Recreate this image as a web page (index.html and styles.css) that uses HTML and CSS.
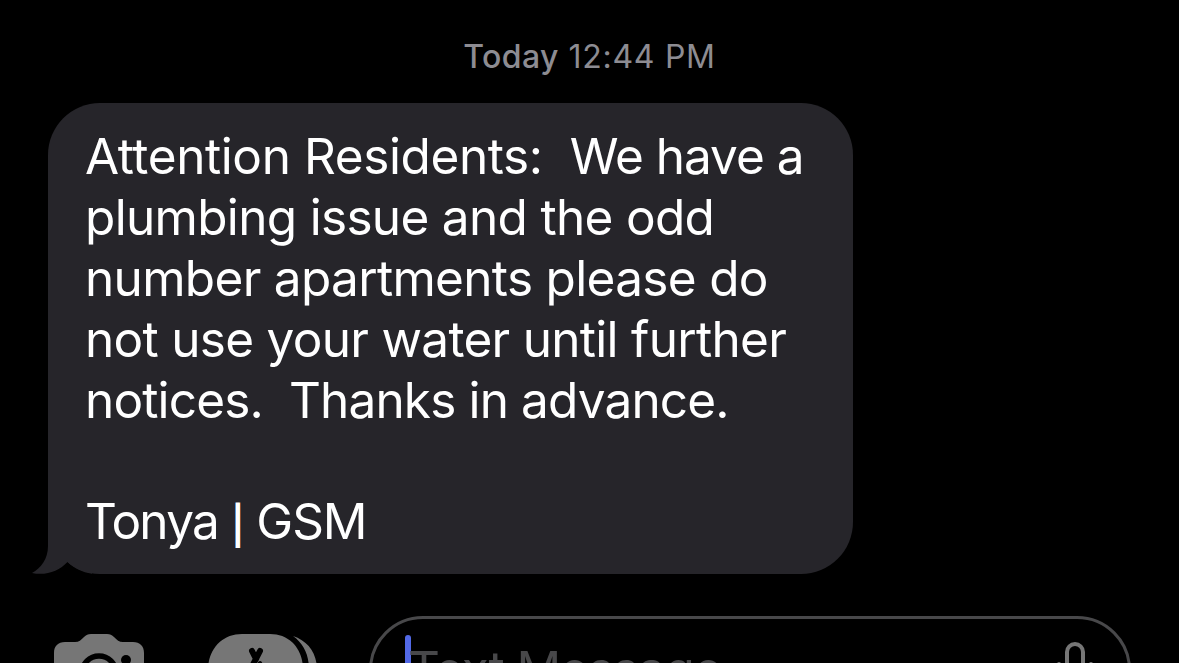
FILE: index.html
```
<!DOCTYPE html>
<html lang="en">
<head>
    <meta charset="UTF-8">
    <meta name="viewport" content="width=device-width, initial-scale=1.0">
    <title>Messages</title>
    <link rel="stylesheet" href="styles.css">
</head>
<body>
    <main class="chat">
        <div class="timestamp"><strong>Today</strong> 12:44 PM</div>
        <div class="bubble">
            <p class="line line-1">Attention Residents:  <span class="tight">We have a</span></p>
            <p class="line line-2">plumbing issue and the odd</p>
            <p class="line line-3">number apartments please do</p>
            <p class="line line-4">not use your water until further</p>
            <p class="line line-5">notices.  Thanks in advance.</p>
            <p class="line"> </p>
            <p class="line line-7"><span class="name">Tonya</span> <span class="pipe">|</span> GSM</p>
            <svg class="tail" width="60" height="64" viewBox="0 0 60 64">
                <path fill="#000" d="M16 28 V64 H60 V63.700 C50 62.500 42 58 35.500 52 L16 28 Z"/>
                <path fill="#26252a" d="M16 0 V36 C16 49 9 58 0 63 C14 66 27 61 35.500 52 C43 59 50 62 60 63.700 V0 Z"/>
            </svg>
        </div>
    </main>
    <footer class="toolbar">
        <svg class="camera" width="90" height="70" viewBox="0 0 90 70">
            <path fill="#767676" d="M11 8 H21 C25 8 27 6 30 3 C32 1 34 0 37 0 H53 C56 0 58 1 60 3 C63 6 65 8 69 8 H79 C86 8 90 12 90 19 V59 Q90 70 79 70 H11 Q0 70 0 59 V19 C0 12 4 8 11 8 Z"/>
            <circle cx="45" cy="39" r="17" fill="none" stroke="#000" stroke-width="5.500"/>
            <circle cx="72" cy="26" r="5" fill="#000"/>
        </svg>
        <svg class="apps" width="110" height="70" viewBox="0 0 110 70">
            <path fill="#767676" d="M34 0 H62 C82 0 95 15 95 36 S82 70 62 70 H34 C14 70 0 57 0 36 S14 0 34 0 Z"/>
            <path fill="#767676" d="M85 2 C100 7 109 19 109 36 S102 66 85 70 C95 62 101 51 101 36 C101 21 96 10 85 2 Z"/>
            <path fill="none" stroke="#000" stroke-width="6" stroke-linecap="round" d="M44 17 L48 25 M52 17 L35 50"/>
            <path fill="none" stroke="#000" stroke-width="4" stroke-linecap="round" d="M52 29 L63 50"/>
        </svg>
        <div class="message-field">
            <span class="cursor"></span>
            <span class="placeholder">Text Message</span>
            <svg class="mic" width="42" height="70" viewBox="0 0 42 70">
                <rect x="13" y="2" width="16" height="40" rx="8" fill="none" stroke="#767676" stroke-width="4"/>
                <path fill="none" stroke="#767676" stroke-width="4" stroke-linecap="round" d="M5 22 V31 C5 55 37 55 37 31 V22 M21 50 V62 M11 62 H31"/>
            </svg>
        </div>
    </footer>
</body>
</html>
```
FILE: styles.css
```
body{
    margin: 0;
    height: 663px;
    overflow: hidden;
    background-color: #000;
    font-family: Inter, sans-serif;
}
.chat{
    padding-top: 36px;
}
.timestamp{
    height: 67px;
    line-height: 41px;
    text-align: center;
    font-size: 32px;
    letter-spacing: 0.7px;
    color: #8d8c92;
}
.timestamp strong{
    font-weight: 550;
    letter-spacing: 0.4px;
}
.bubble{
    position: relative;
    box-sizing: border-box;
    width: 805px;
    height: 471px;
    margin-left: 48px;
    padding: 23px 37px;
    border-radius: 52px;
    background-color: #26252a;
    color: #fff;
    font-size: 49.5px;
}
.line{
    margin: 0;
    height: 60.9px;
    line-height: 61px;
    white-space: pre;
}
.line-1{
    letter-spacing: -0.4px;
}
.tight{
    letter-spacing: -1px;
}
.line-2, .line-3{
    letter-spacing: -0.68px;
}
.line-4{
    letter-spacing: -0.7px;
}
.line-5{
    letter-spacing: -0.85px;
}
.line-7{
    letter-spacing: -1.1px;
}
.name{
    letter-spacing: -1.7px;
}
.pipe{
    font-size: 38px;
    font-weight: 600;
}
.tail{
    position: absolute;
    left: -16px;
    bottom: 0;
}
.toolbar{
    display: flex;
    height: 89px;
    padding-top: 42px;
}
.camera{
    margin: 18px 65px 0 54px;
}
.apps{
    margin: 18px 51px 0 -1px;
}
.message-field{
    display: flex;
    box-sizing: border-box;
    width: 762px;
    height: 108px;
    padding-left: 33px;
    border: 3px solid #48484a;
    border-radius: 54px;
}
.cursor{
    width: 6px;
    height: 64px;
    margin-top: 16px;
    border-radius: 3px;
    background-color: #5269e6;
}
.placeholder{
    flex: 1;
    margin: 20px 0 0 -3px;
    line-height: 61px;
    font-size: 49.5px;
    letter-spacing: -1.1px;
    color: #48484a;
}
.mic{
    margin: 23px 32px 0 0;
}
```
